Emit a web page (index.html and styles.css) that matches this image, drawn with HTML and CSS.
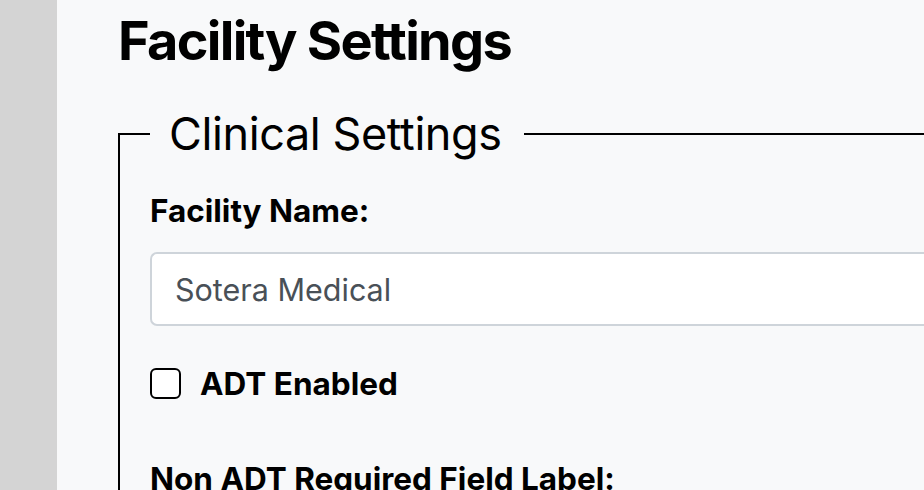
FILE: index.html
```html
<!DOCTYPE html>
<html lang="en">
<head>
<meta charset="utf-8">
<title>Facility Settings</title>
<link rel="stylesheet" href="styles.css">
</head>
<body>
<div class="layout">
  <aside class="sidebar"></aside>
  <main class="main">
    <h1 class="page-title">Facility Settings</h1>
    <fieldset class="settings-group">
      <legend class="group-title">Clinical Settings</legend>
      <div class="field">
        <label class="field-label" for="facility-name">Facility Name:</label>
        <input id="facility-name" class="text-input" type="text" value="Sotera Medical">
      </div>
      <div class="check-row">
        <input id="adt" class="checkbox" type="checkbox">
        <label class="check-label" for="adt">ADT Enabled</label>
      </div>
      <div class="field">
        <label class="field-label">Non ADT Required Field Label:</label>
      </div>
    </fieldset>
  </main>
</div>
</body>
</html>
```

FILE: styles.css
```css
* { box-sizing: border-box; }
html, body { margin: 0; padding: 0; height: 100%; overflow: hidden; }
body { font-family: Inter, "Liberation Sans", sans-serif; color: #000; background: #f8f9fa; }
.layout { display: flex; min-height: 100%; }
.sidebar { width: 57px; flex: none; background: #d4d4d4; }
.main { flex: 1; padding: 8px 0 0 61px; min-width: 0; }
.page-title { margin: 0; font-size: 54px; font-weight: 700; letter-spacing: -1.7px; line-height: 66px; }
.settings-group { margin: 33px 0 0 0; border: 2px solid #000; border-right: none; padding: 0 0 120px 30px; }
.group-title { font-size: 45px; font-weight: 400; padding: 0 22px 0 19px; line-height: 54px; letter-spacing: -0.4px; }
.field { display: flex; flex-direction: column; }
.field-label { font-size: 31.5px; font-weight: 700; line-height: 38px; margin-top: 31px; margin-bottom: 22px; }
.text-input { height: 74px; border: 2px solid #ced4da; border-right: none; border-radius: 7px 0 0 7px; background: #fff; padding: 0 23px; font-family: inherit; font-size: 30.5px; color: #495057; width: 100%; outline: none; }
.check-row { display: flex; align-items: center; gap: 19px; margin-top: 42px; margin-bottom: 30px; }
.checkbox { appearance: none; -webkit-appearance: none; flex: none; width: 31px; height: 31px; margin: 0; border: 2px solid #000; border-radius: 6px; background: #fff; }
.check-label { font-size: 31.5px; font-weight: 700; line-height: 31px; }
```
